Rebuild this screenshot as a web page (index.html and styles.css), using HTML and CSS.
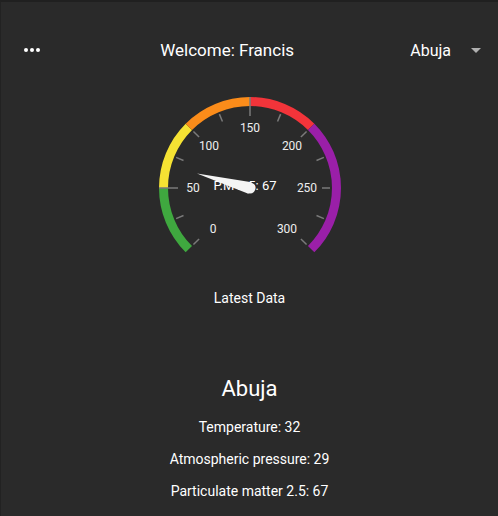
FILE: index.html
```html
<!DOCTYPE html>
<html>
<head>
    <title>Air Quality</title>
    <link rel="stylesheet" href="styles.css">
</head>
<body>
    <div class="app">
        <div class="header">
            <svg class="icon" width="24" height="24" viewBox="0 0 24 24">
                <circle cx="6" cy="12" r="2" fill="#fff"/>
                <circle cx="12" cy="12" r="2" fill="#fff"/>
                <circle cx="18" cy="12" r="2" fill="#fff"/>
            </svg>
            <div class="welcome">Welcome: Francis</div>
            <div class="city-select">
                <span>Abuja</span>
                <svg class="icon" width="24" height="24" viewBox="0 0 24 24">
                    <path d="M7 10l5 5 5-5z" fill="#b0b0b0"/>
                </svg>
            </div>
        </div>

        <div class="gauge-box">
            <svg class="gauge" width="200" height="175" viewBox="0 0 200 175">
                <g fill="none" stroke-width="9">
                    <path d="M38.84 161.16 A86.5 86.5 0 0 1 13.5 100" stroke="#3fa83f"/>
                    <path d="M13.5 100 A86.5 86.5 0 0 1 38.84 38.84" stroke="#f5e233"/>
                    <path d="M38.84 38.84 A86.5 86.5 0 0 1 100 13.5" stroke="#fb8c1a"/>
                    <path d="M100 13.5 A86.5 86.5 0 0 1 161.16 38.84" stroke="#f2343a"/>
                    <path d="M161.16 38.84 A86.5 86.5 0 0 1 161.16 161.16" stroke="#9a1fa8"/>
                </g>
                <g stroke="#7a7a7a" stroke-width="1.5">
                    <line x1="49.09" y1="150.91" x2="43.43" y2="156.57"/>
                    <line x1="33.48" y1="127.55" x2="26.09" y2="130.62"/>
                    <line x1="28" y1="100" x2="9" y2="100"/>
                    <line x1="33.48" y1="72.45" x2="26.09" y2="69.38"/>
                    <line x1="49.09" y1="49.09" x2="43.43" y2="43.43"/>
                    <line x1="72.45" y1="33.48" x2="69.38" y2="26.09"/>
                    <line x1="100" y1="28" x2="100" y2="9"/>
                    <line x1="127.55" y1="33.48" x2="130.62" y2="26.09"/>
                    <line x1="150.91" y1="49.09" x2="156.57" y2="43.43"/>
                    <line x1="166.52" y1="72.45" x2="173.91" y2="69.38"/>
                    <line x1="172" y1="100" x2="180" y2="100"/>
                    <line x1="166.52" y1="127.55" x2="173.91" y2="130.62"/>
                    <line x1="150.91" y1="150.91" x2="156.57" y2="156.57"/>
                </g>
                <g class="gauge-labels" text-anchor="middle">
                    <text x="63" y="145">0</text>
                    <text x="43" y="104">50</text>
                    <text x="59" y="62">100</text>
                    <text x="100" y="44">150</text>
                    <text x="142" y="62">200</text>
                    <text x="157" y="104">250</text>
                    <text x="137" y="145">300</text>
                </g>
                <text class="gauge-value" x="95" y="102" text-anchor="middle">P.M 2.5: 67</text>
                <polygon points="46.95,85.49 101.6,94.2 98.4,105.8" fill="#f4f4f4"/>
                <circle cx="100" cy="100" r="5.5" fill="#f4f4f4"/>
            </svg>
        </div>

        <div class="latest">Latest Data</div>

        <div class="data">
            <div class="city">Abuja</div>
            <div class="row">Temperature: 32</div>
            <div class="row">Atmospheric pressure: 29</div>
            <div class="row">Particulate matter 2.5: 67</div>
        </div>
    </div>
</body>
</html>
```

FILE: styles.css
```css
body {
    margin: 0;
    padding: 0;
    background-color: #2a2a2a;
    color: #fff;
    font-family: Roboto, "Noto Sans", sans-serif;
}
.app {
    height: 514px;
    border-top: 2px solid #202020;
    border-left: 1px solid #222;
    overflow: hidden;
}
.header {
    display: flex;
    align-items: center;
    justify-content: space-between;
    padding: 36px 10px 0 19px;
    height: 24px;
}
.icon {
    display: block;
}
.welcome {
    font-size: 17px;
    line-height: 24px;
}
.city-select {
    display: flex;
    align-items: center;
    gap: 13px;
    font-size: 16px;
}
.gauge-box {
    display: flex;
    justify-content: center;
    margin-top: 26px;
}
.gauge {
    display: block;
    margin-left: 1px;
}
.gauge-labels {
    font-size: 12px;
    fill: #eee;
}
.gauge-value {
    font-size: 13px;
    fill: #fff;
}
.latest {
    text-align: center;
    font-size: 14px;
    line-height: 20px;
    margin-top: 25px;
}
.data {
    text-align: center;
    margin-top: 67px;
}
.city {
    font-size: 22px;
    line-height: 28px;
    margin-bottom: 14px;
}
.row {
    font-size: 14px;
    line-height: 20px;
    margin-bottom: 12px;
}
```
